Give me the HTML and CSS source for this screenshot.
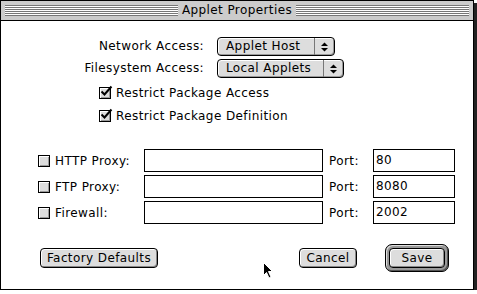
FILE: index.html
```html
<!DOCTYPE html>
<html lang="en">
<head>
    <meta charset="UTF-8">
    <meta name="viewport" content="width=device-width, initial-scale=1.0">
    <title>Applet Properties</title>
    <link rel="stylesheet" href="styles.css">
</head>
<body>
    <div class="window">
        <div class="titlebar">
            <span class="stripes"></span>
            <span class="title">Applet Properties</span>
            <span class="stripes"></span>
        </div>

        <div class="content">
            <div class="access">
                <label class="field-label">Network Access:</label>
                <div class="popup popup-host">
                    <span class="popup-text">Applet Host</span>
                    <span class="popup-arrow">
                        <svg width="7" height="10" viewBox="0 0 7 10"><polygon points="0,4 3.5,0.5 7,4"/><polygon points="0,6 7,6 3.5,9.5"/></svg>
                    </span>
                </div>
                <label class="field-label">Filesystem Access:</label>
                <div class="popup popup-local">
                    <span class="popup-text">Local Applets</span>
                    <span class="popup-arrow">
                        <svg width="7" height="10" viewBox="0 0 7 10"><polygon points="0,4 3.5,0.5 7,4"/><polygon points="0,6 7,6 3.5,9.5"/></svg>
                    </span>
                </div>
            </div>

            <div class="restrict">
                <div class="check-row">
                    <span class="checkbox checked">
                        <svg width="14" height="14" viewBox="0 0 14 14"><path d="M2.5 6.5 L5.5 9.5 L12.5 1.5" fill="none" stroke="#000" stroke-width="2"/></svg>
                    </span>
                    Restrict Package Access
                </div>
                <div class="check-row">
                    <span class="checkbox checked">
                        <svg width="14" height="14" viewBox="0 0 14 14"><path d="M2.5 6.5 L5.5 9.5 L12.5 1.5" fill="none" stroke="#000" stroke-width="2"/></svg>
                    </span>
                    Restrict Package Definition
                </div>
            </div>

            <div class="proxies">
                <div class="proxy-name"><span class="checkbox"></span>HTTP Proxy:</div>
                <div class="textfield"></div>
                <div class="port-label">Port:</div>
                <div class="textfield">80</div>

                <div class="proxy-name"><span class="checkbox"></span>FTP Proxy:</div>
                <div class="textfield"></div>
                <div class="port-label">Port:</div>
                <div class="textfield">8080</div>

                <div class="proxy-name"><span class="checkbox"></span>Firewall:</div>
                <div class="textfield"></div>
                <div class="port-label">Port:</div>
                <div class="textfield">2002</div>
            </div>

            <div class="buttons">
                <button class="btn btn-factory">Factory Defaults</button>
                <button class="btn btn-cancel">Cancel</button>
                <div class="default-ring">
                    <button class="btn btn-save">Save</button>
                </div>
            </div>
        </div>

        <svg class="cursor" width="11" height="17" viewBox="0 0 11 17">
            <path d="M0.5 0.5 L0.5 13.5 L3.5 10.5 L6 16 L8 15 L5.5 9.5 L9.5 9.5 Z" fill="#000" stroke="#fff" stroke-width="1"/>
        </svg>
    </div>
</body>
</html>
```

FILE: styles.css
```css
body {
    margin: 0;
    background-color: #fff;
    font-family: "DejaVu Sans", Verdana, sans-serif;
    font-size: 12px;
    letter-spacing: 0.4px;
    color: #000;
}

.window {
    position: relative;
    width: 472px;
    height: 288px;
    border: 1px solid #000;
    background-color: #fff;
    box-shadow: 3px 3px 0 #222;
}

/* barra de titulo */
.titlebar {
    display: flex;
    align-items: center;
    height: 19px;
    padding: 0 4px;
    background-color: #ccc;
    border-bottom: 1px solid #000;
}

.stripes {
    flex: 1;
    height: 11px;
    margin-top: -1px;
    background: repeating-linear-gradient(to bottom, #777 0, #777 1px, #fff 1px, #fff 2px);
}

.title {
    padding: 0 4px;
    line-height: 19px;
}

.content {
    display: flex;
    flex-direction: column;
}

/* popups */
.access {
    display: grid;
    grid-template-columns: 203px auto;
    column-gap: 13px;
    row-gap: 3px;
    margin-top: 16px;
    align-items: center;
    justify-items: start;
}

.field-label {
    justify-self: end;
    line-height: 19px;
}

.popup {
    display: flex;
    height: 19px;
    box-sizing: border-box;
    border: 1px solid #000;
    border-radius: 4px;
    background-color: #ddd;
    box-shadow: inset 1px 1px 0 #fff, inset -1px -1px 0 #999;
}

.popup-host {
    width: 118px;
}

.popup-local {
    width: 127px;
}

.popup-text {
    flex: 1;
    padding-left: 8px;
    line-height: 17px;
}

.popup-arrow {
    display: flex;
    align-items: center;
    justify-content: center;
    width: 19px;
    border-left: 1px solid #777;
}

/* checkboxes */
.restrict {
    display: flex;
    flex-direction: column;
    gap: 11px;
    margin-top: 9px;
    padding-left: 98px;
}

.check-row {
    display: flex;
    align-items: center;
    height: 12px;
    line-height: 12px;
}

.checkbox {
    position: relative;
    flex: none;
    width: 12px;
    height: 12px;
    box-sizing: border-box;
    margin-right: 5px;
    border: 1px solid #000;
    background-color: #ddd;
    box-shadow: inset 1px 1px 0 #fff, inset -1px -1px 0 #999;
}

.checkbox svg {
    position: absolute;
    left: -1px;
    top: -3px;
}

/* proxies */
.proxies {
    display: grid;
    grid-template-columns: 106px 179px 50px 82px;
    grid-auto-rows: 23px;
    row-gap: 3px;
    margin-top: 27px;
    padding-left: 37px;
    align-items: center;
}

.proxy-name {
    display: flex;
    align-items: center;
}

.textfield {
    height: 23px;
    box-sizing: border-box;
    border: 1px solid #000;
    padding-left: 2px;
    line-height: 21px;
}

.port-label {
    padding-left: 6px;
}

/* botoes */
.buttons {
    display: flex;
    align-items: center;
    height: 28px;
    margin-top: 20px;
    padding-left: 39px;
    padding-right: 24px;
}

.btn {
    height: 20px;
    padding: 0;
    border: 1px solid #000;
    border-radius: 4px;
    background-color: #ddd;
    box-shadow: inset 1px 1px 0 #fff, inset -1px -1px 0 #888;
    font-family: inherit;
    font-size: 12px;
    letter-spacing: inherit;
    color: #000;
}

.btn-factory {
    width: 118px;
}

.btn-cancel {
    width: 58px;
    margin-left: auto;
    margin-right: 28px;
}

.default-ring {
    display: flex;
    padding: 3px;
    border: 1px solid #000;
    border-radius: 7px;
    background-color: #999;
    box-shadow: inset 1px 1px 0 #ddd, inset -1px -1px 0 #555;
}

.btn-save {
    width: 56px;
}

.cursor {
    position: absolute;
    left: 262px;
    top: 261px;
}
```
